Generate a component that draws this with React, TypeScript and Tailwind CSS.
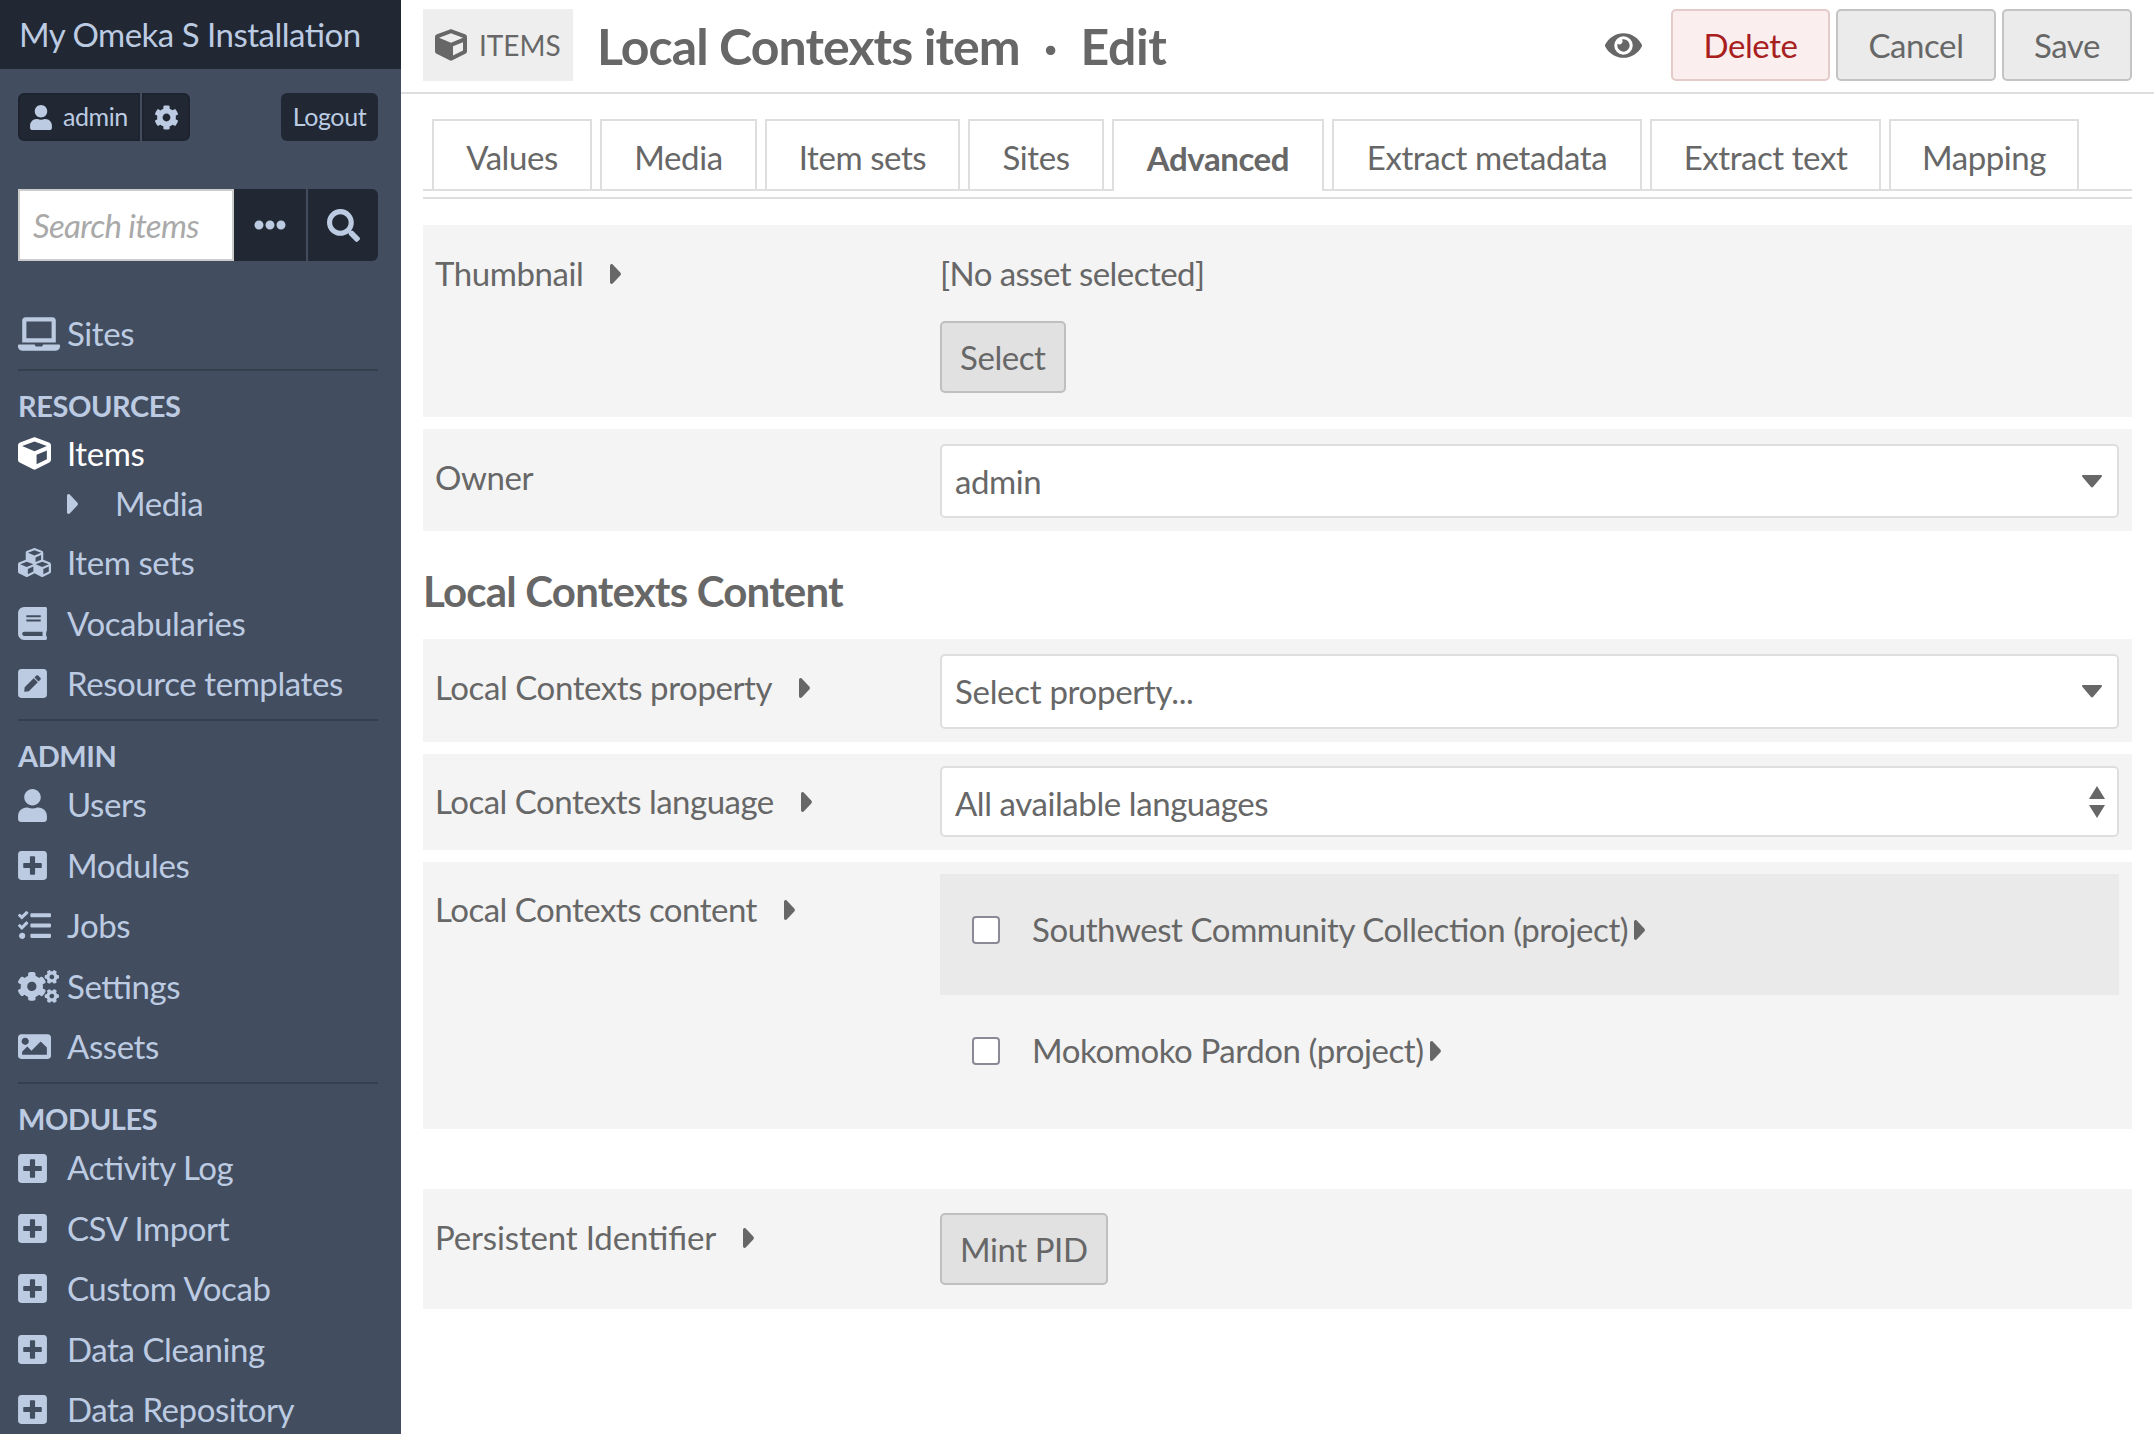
import React from "react";
import { FaUser, FaCog, FaEllipsisH, FaSearch, FaLaptop, FaCube, FaCubes, FaBook, FaPenSquare, FaPlusSquare, FaTasks, FaCogs, FaImage, FaEye } from "react-icons/fa";

function RightCaret({ className = "" }: { className?: string }) {
  return (
    <svg width="11" height="20" viewBox="0 0 11 20" className={`shrink-0 fill-current ${className}`}>
      <path d="M0 1.800C0 .300 1.600-.500 2.700.500l7.600 8c.8.800.8 2.200 0 3l-7.600 8C1.600 20.500 0 19.700 0 18.200z" />
    </svg>
  );
}

function NavRow({ icon, label, active }: { icon: React.ReactNode; label: string; active?: boolean }) {
  return (
    <div className={`flex h-[60.4px] items-center ${active ? "text-white" : ""}`}>
      <span className="flex w-[49px] shrink-0 items-center">{icon}</span>
      <span>{label}</span>
    </div>
  );
}

function Heading({ children, first }: { children: React.ReactNode; first?: boolean }) {
  return (
    <div className={`flex items-end text-[29px] font-bold leading-[34px] ${first ? "h-[52px]" : "h-[54px] pb-[2px]"}`}>
      {children}
    </div>
  );
}

const Divider = () => <div className="mt-[5px] h-[2px] bg-[#363f4e]" />;

function Plus({ label }: { label: string }) {
  return <NavRow icon={<FaPlusSquare size={33} className="w-[29px]" />} label={label} />;
}

function Sidebar() {
  return (
    <aside className="flex h-[1434px] w-[401px] shrink-0 flex-col overflow-hidden bg-[#424d5f] text-[33px] text-[#bccbe2]">
      <div className="flex h-[69px] shrink-0 items-center bg-[#212833] pl-[19px] text-[33px] tracking-[-0.5px]">My Omeka S Installation</div>
      <div className="pl-[18px] pr-[23px]">
        <div className="mt-[24px] flex h-[48px] justify-between text-[25px]">
          <div className="flex gap-[2px]">
            <div className="flex w-[122px] items-center gap-[11px] rounded-l-[6px] border-2 border-[#1d2430] bg-[#212833] pl-[10px]">
              <FaUser size={25} className="w-[22px]" />
              <span>admin</span>
            </div>
            <div className="flex w-[48px] items-center justify-center rounded-r-[6px] border-2 border-[#1d2430] bg-[#212833]">
              <FaCog size={25} />
            </div>
          </div>
          <div className="flex w-[97px] items-center justify-center rounded-[6px] bg-[#212833]">Logout</div>
        </div>
        <div className="mt-[48px] flex h-[72px]">
          <input
            readOnly
            placeholder="Search items"
            className="h-full w-[216px] border-2 border-[#ccc] bg-white pl-[13px] text-[33px] italic tracking-[-0.7px] outline-none placeholder:text-[#a9a9a9]"
          />
          <div className="flex w-[72px] items-center justify-center bg-[#212833]">
            <FaEllipsisH size={32} />
          </div>
          <div className="ml-[2px] flex w-[70px] items-center justify-center rounded-r-[6px] bg-[#212833]">
            <FaSearch size={33} />
          </div>
        </div>
        <div className="mt-[43px]">
          <NavRow icon={<FaLaptop size={42} />} label="Sites" />
        </div>
        <Divider />
        <Heading first>RESOURCES</Heading>
        <NavRow active icon={<FaCube size={33} />} label="Items" />
        <div className="mb-[11px] flex h-[38px] items-center pl-[49px] pt-[2px]">
          <RightCaret />
          <span className="ml-[37px]">Media</span>
        </div>
        <NavRow icon={<FaCubes size={33} />} label="Item sets" />
        <NavRow icon={<FaBook size={33} className="w-[29px]" />} label="Vocabularies" />
        <NavRow icon={<FaPenSquare size={33} className="w-[29px]" />} label="Resource templates" />
        <Divider />
        <Heading>ADMIN</Heading>
        <NavRow icon={<FaUser size={33} className="w-[29px]" />} label="Users" />
        <Plus label="Modules" />
        <NavRow icon={<FaTasks size={33} />} label="Jobs" />
        <NavRow icon={<FaCogs size={41} />} label="Settings" />
        <NavRow icon={<FaImage size={33} />} label="Assets" />
        <Divider />
        <Heading>MODULES</Heading>
        <Plus label="Activity Log" />
        <Plus label="CSV Import" />
        <Plus label="Custom Vocab" />
        <Plus label="Data Cleaning" />
        <Plus label="Data Repository" />
      </div>
    </aside>
  );
}

function ActionButton({ children, tone = "gray", w }: { children: React.ReactNode; tone?: "gray" | "red"; w: string }) {
  return (
    <div
      className={`flex h-[72px] items-center justify-center rounded-[5px] border-2 pt-[2px] ${w} ${
        tone === "red" ? "border-[#e5caca] bg-[#fbeeee] text-[#a91e1e]" : "border-[#c4c4c4] bg-[#ebebeb]"
      }`}
    >
      {children}
    </div>
  );
}

function PageHeader() {
  return (
    <header className="flex h-[94px] shrink-0 items-start border-b-2 border-[#dedede] pl-[22px] pr-[22px] pt-[9px]">
      <div className="flex h-[72px] w-[150px] items-center gap-[12px] bg-[#eeeeee] pl-[12px] text-[28px] tracking-normal">
        <FaCube size={32} />
        <span>ITEMS</span>
      </div>
      <h1 className="ml-[24px] flex h-[72px] items-center pt-[2px] text-[50px] font-bold tracking-[-0.9px]">
        <span>Local Contexts item</span>
        <span className="mx-[24px]">·</span>
        <span className="tracking-[-0.4px]">Edit</span>
      </h1>
      <div className="ml-auto flex items-center gap-[6px]">
        <FaEye size={37} className="mr-[23px]" />
        <ActionButton tone="red" w="w-[159px]">Delete</ActionButton>
        <ActionButton w="w-[160px]">Cancel</ActionButton>
        <ActionButton w="w-[130px]">Save</ActionButton>
      </div>
    </header>
  );
}

const tabs = [
  { t: "Values", w: "w-[160px]" },
  { t: "Media", w: "w-[157px]" },
  { t: "Item sets", w: "w-[195px]" },
  { t: "Sites", w: "w-[136px]" },
  { t: "Advanced", w: "w-[212px]" },
  { t: "Extract metadata", w: "w-[310px]" },
  { t: "Extract text", w: "w-[231px]" },
  { t: "Mapping", w: "w-[190px]" },
];

function Tabs() {
  return (
    <div className="mx-[22px] mt-[25px] border-b-2 border-[#dedede] pb-[6px]">
      <div className="flex h-[72px] gap-[8px] border-b-2 border-[#dedede] pl-[9px]">
        {tabs.map(({ t, w }) => (
          <div
            key={t}
            className={`flex items-center justify-center border-2 border-b-0 border-[#dedede] pt-[5px] ${w} ${
              t === "Advanced" ? "mb-[-2px] bg-white font-bold" : ""
            }`}
          >
            {t}
          </div>
        ))}
      </div>
    </div>
  );
}

function Label({ text, info = true, top, tight }: { text: string; info?: boolean; top: string; tight?: string }) {
  return (
    <div className={`flex w-[517px] shrink-0 items-center pl-[12px] ${top}`}>
      <span className={tight}>{text}</span>
      {info && <RightCaret className="ml-[27px]" />}
    </div>
  );
}

function Caret() {
  return (
    <svg width="20" height="13" viewBox="0 0 20 13" className="ml-auto mr-[15px] shrink-0 fill-[#676767]">
      <path d="M1 0h18c1 0 1.300 1 .7 1.700L11 12c-.6.600-1.400.600-2 0L.3 1.700C-.3 1 0 0 1 0z" />
    </svg>
  );
}

function UpDown() {
  return (
    <svg width="16" height="32" viewBox="0 0 16 32" className="ml-auto mr-[12px] shrink-0 fill-[#676767]">
      <path d="M8 0l8 13H0zM0 19h16L8 32z" />
    </svg>
  );
}

function SelectBox({ value, h, icon, pt }: { value: string; h: string; icon: React.ReactNode; pt: string }) {
  return (
    <div className={`flex w-[1179px] items-center rounded-[5px] border-2 border-[#dedede] bg-white pl-[13px] ${h}`}>
      <span className={pt}>{value}</span>
      {icon}
    </div>
  );
}

function CheckRow({ text, shaded }: { text: string; shaded?: boolean }) {
  return (
    <div className={`flex h-[121px] w-[1179px] items-center pb-[10px] pl-[32px] ${shaded ? "bg-[#eaeaea]" : ""}`}>
      <input
        type="checkbox"
        readOnly
        className="h-[28px] w-[28px] shrink-0 appearance-none rounded-[4px] border-2 border-[#8a8a96] bg-white"
      />
      <span className="ml-[32px]">{text}</span>
      <RightCaret className="ml-[6px]" />
    </div>
  );
}

function GrayButton({ children }: { children: React.ReactNode }) {
  return (
    <div className="flex h-[72px] w-fit items-center rounded-[5px] border-2 border-[#bfbfbf] bg-[#e1e1e1] px-[18px] pt-[2px]">
      {children}
    </div>
  );
}

function Form() {
  return (
    <div className="px-[22px] pt-[26px]">
      <section className="flex h-[192px] bg-[#f4f4f4]">
        <Label text="Thumbnail" top="h-[98px]" />
        <div className="pt-[27px]">
          <div className="leading-[42px] tracking-[-0.55px]">[No asset selected]</div>
          <div className="mt-[27px]">
            <GrayButton>Select</GrayButton>
          </div>
        </div>
      </section>
      <section className="mt-[12px] flex h-[102px] items-start bg-[#f4f4f4] pt-[15px]">
        <Label text="Owner" info={false} top="h-[68px]" />
        <SelectBox value="admin" h="h-[74px]" pt="pt-[2px]" icon={<Caret />} />
      </section>
      <h2 className="mb-[23px] mt-[35px] text-[42px] font-bold leading-[50px] tracking-[-0.8px]">Local Contexts Content</h2>
      <section className="flex h-[103px] items-start bg-[#f4f4f4] pt-[15px]">
        <Label text="Local Contexts property" top="h-[68px]" />
        <SelectBox value="Select property..." h="h-[75px]" pt="pt-[1px] tracking-[-0.3px]" icon={<Caret />} />
      </section>
      <section className="mt-[12px] flex h-[96px] items-start bg-[#f4f4f4] pt-[12px]">
        <Label text="Local Contexts language" top="h-[72px]" tight="tracking-[-0.5px]" />
        <SelectBox value="All available languages" h="h-[71px]" pt="pt-[5px]" icon={<UpDown />} />
      </section>
      <section className="mt-[12px] flex h-[267px] items-start bg-[#f4f4f4] pt-[12px]">
        <Label text="Local Contexts content" top="h-[72px]" tight="tracking-[-0.5px]" />
        <div>
          <CheckRow shaded text="Southwest Community Collection (project)" />
          <CheckRow text="Mokomoko Pardon (project)" />
        </div>
      </section>
      <section className="mt-[60px] flex h-[120px] items-start bg-[#f4f4f4] pt-[24px]">
        <Label text="Persistent Identifier" top="h-[50px]" tight="tracking-[-0.15px]" />
        <GrayButton>Mint PID</GrayButton>
      </section>
    </div>
  );
}

export default function App() {
  return (
    <div className="flex h-[1434px] w-[2154px] overflow-hidden bg-white font-['Lato',sans-serif] text-[33px] tracking-[-0.42px] text-[#676767] [font-feature-settings:'liga']">
      <Sidebar />
      <main className="min-w-0 flex-1">
        <PageHeader />
        <Tabs />
        <Form />
      </main>
    </div>
  );
}
